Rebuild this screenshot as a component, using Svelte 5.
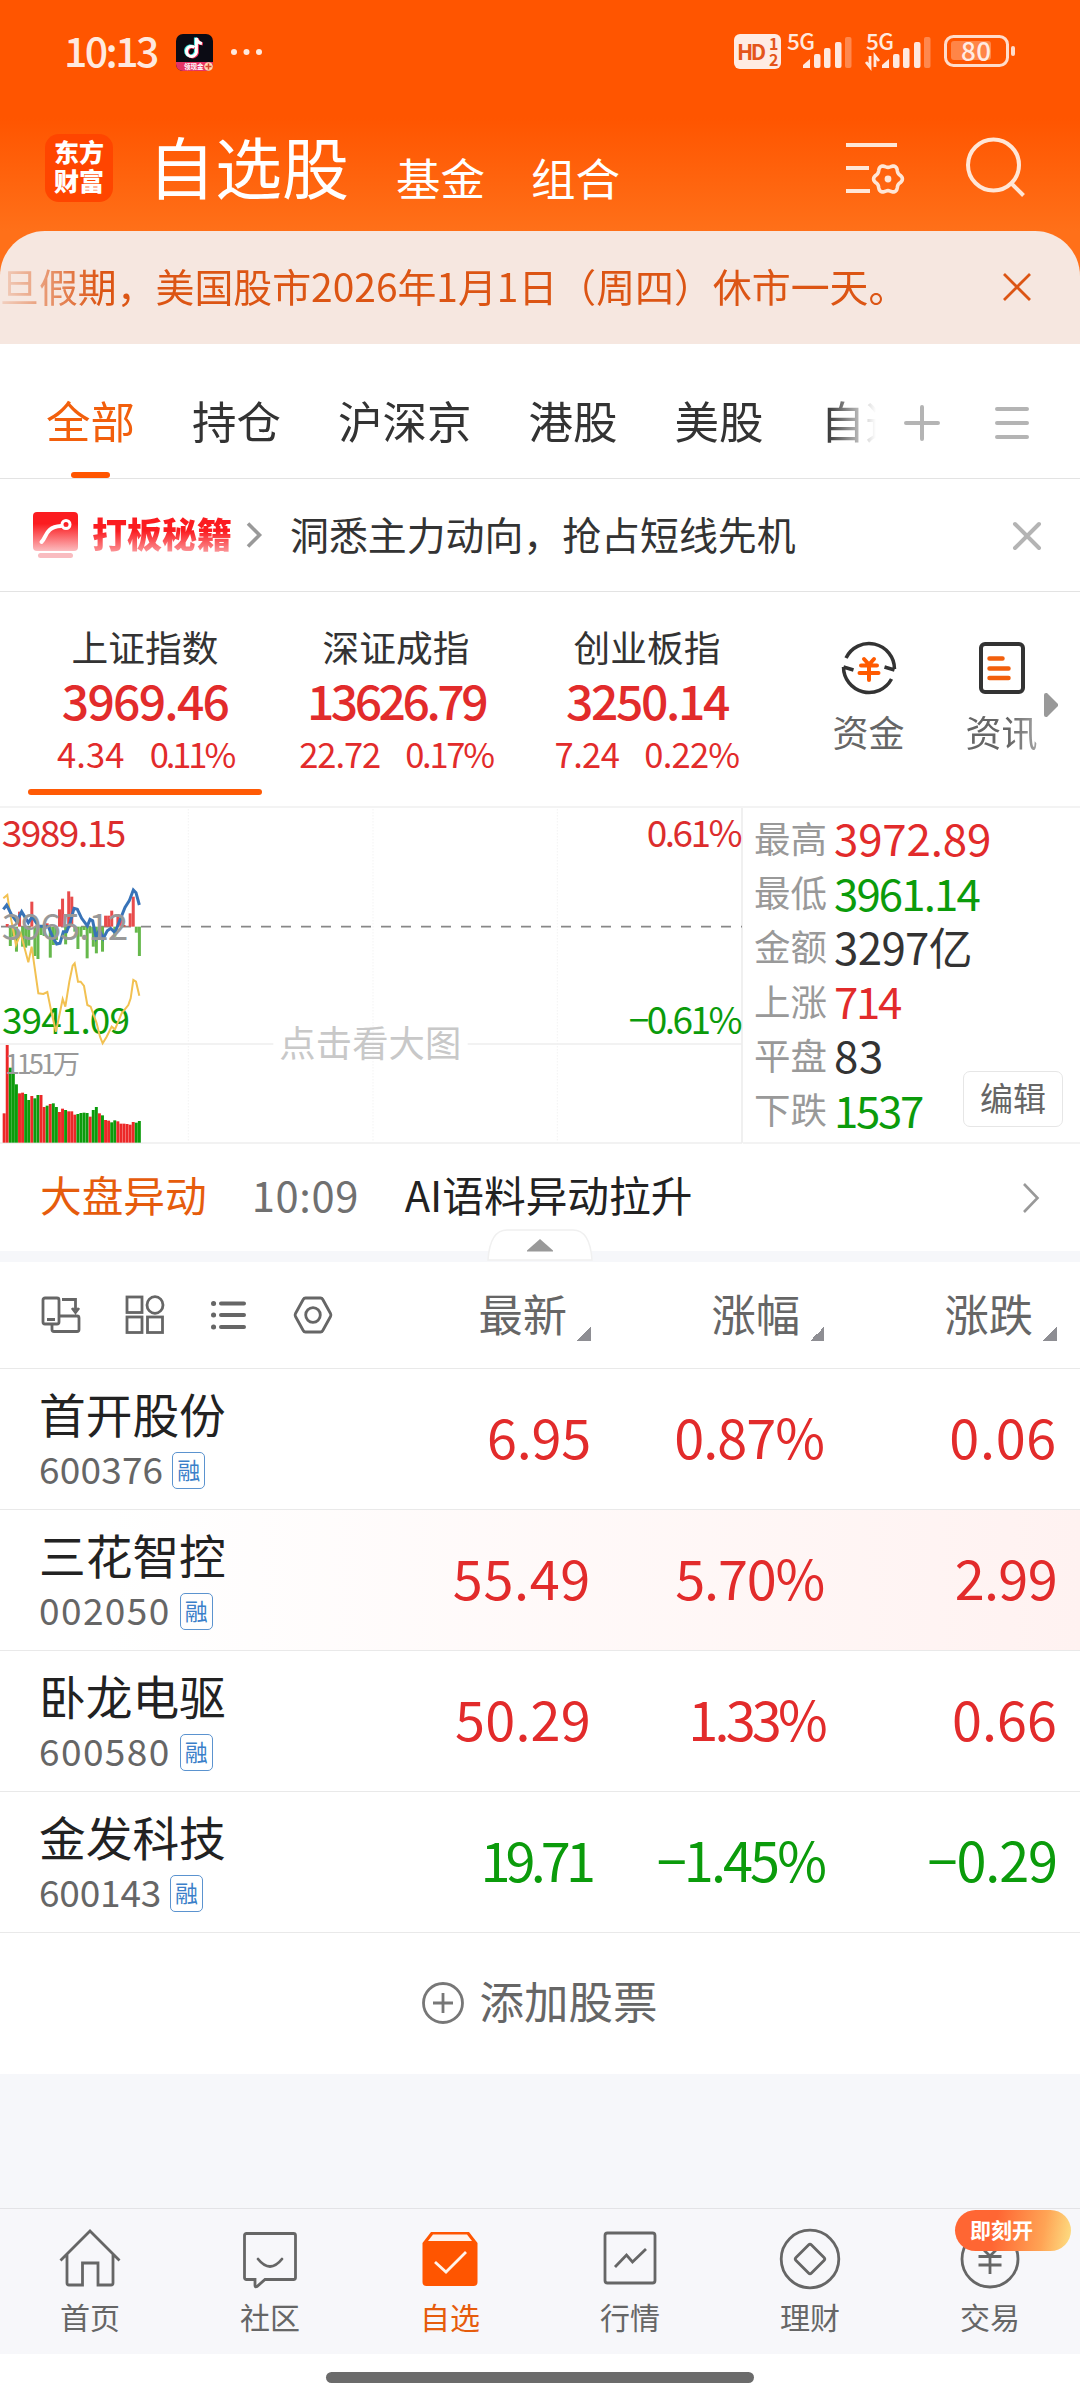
<script lang="ts">
  type Quote = {
    name: string;
    code: string;
    price: string;
    percent: string;
    change: string;
    down?: boolean;
    hot?: boolean;
  };

  const groups = ['全部', '持仓', '沪深京', '港股', '美股', '自选'];
  let activeGroup = $state('全部');

  const indices = [
    { name: '上证指数', value: '3969.46', change: '4.34', percent: '0.11%' },
    { name: '深证成指', value: '13626.79', change: '22.72', percent: '0.17%' },
    { name: '创业板指', value: '3250.14', change: '7.24', percent: '0.22%' }
  ];
  let activeIndex = $state(0);

  const stats = [
    { label: '最高', value: '3972.89', tone: 'up' },
    { label: '最低', value: '3961.14', tone: 'down' },
    { label: '金额', value: '3297亿', tone: '' },
    { label: '上涨', value: '714', tone: 'up' },
    { label: '平盘', value: '83', tone: '' },
    { label: '下跌', value: '1537', tone: 'down' }
  ];

  const columns = ['最新', '涨幅', '涨跌'];

  const quotes: Quote[] = [
    { name: '首开股份', code: '600376', price: '6.95', percent: '0.87%', change: '0.06' },
    { name: '三花智控', code: '002050', price: '55.49', percent: '5.70%', change: '2.99', hot: true },
    { name: '卧龙电驱', code: '600580', price: '50.29', percent: '1.33%', change: '0.66' },
    { name: '金发科技', code: '600143', price: '19.71', percent: '−1.45%', change: '−0.29', down: true }
  ];

  const nav = [
    { id: 'home', label: '首页' },
    { id: 'community', label: '社区' },
    { id: 'watch', label: '自选' },
    { id: 'market', label: '行情' },
    { id: 'wealth', label: '理财' },
    { id: 'trade', label: '交易' }
  ];
  let activeNav = $state('watch');

  // proportional figures: a number with many ones is set tighter, one with many zeros wider
  const widths: Record<string, number> = {
    0: 0.05,
    1: -0.17,
    3: -0.02,
    4: 0.06,
    5: 0.03,
    7: -0.05,
    8: 0.05,
    '%': -0.08,
    '−': -0.09
  };

  function tracking(text: string, base = 0) {
    const sum = [...text].reduce((total, char) => total + (widths[char] ?? 0), 0);
    return `${(base + sum / text.length).toFixed(4)}em`;
  }

  function gear(cx: number, cy: number) {
    const points: string[] = [];
    for (let deg = 0; deg < 360; deg += 5) {
      const a = (deg * Math.PI) / 180;
      const r = 13 + 1.4 * Math.cos(6 * a);
      points.push(`${(cx + r * Math.cos(a)).toFixed(2)},${(cy + r * Math.sin(a)).toFixed(2)}`);
    }
    return points.join(' ');
  }

  // chart units are a third of a pixel
  const slot = 9.22;
  const volumes = [
    88, 293, 225, 208, 175, 148, 150, 146, 128, 140, 133, 143, 143, 107, 111, 116, 118, 107, 92, 102, 98, 94, 94,
    84, 86, 89, 90, 89, 78, 98, 107, 88, 82, 68, 66, 61, 67, 64, 57, 57, 56, 54, 62, 60, 65
  ];
  const volumeSigns = 'rrgggrrggrggrrgrggrrgrrrggggrggrgrrggrrrrrrgg';
  const momentum = [
    0, 8, -58, -30, -75, 45, -60, -63, -57, 75, -88, -97, -25, -28, 10, -93, -55, -40, 52, 84, -53, 106, 90, -15,
    -67, -30, -10, -95, -20, -60, -80, -10, -75, 33, 33, 48, -30, 38, 20, 5, 0, 40, 90, -18, -88
  ];
  const priceLine =
    '10,328 20,315 35,345 50,365 65,335 85,368 97,350 115,378 145,380 160,415 170,432 180,430 190,395 200,395 210,370 222,325 232,328 245,355 262,378 270,358 278,362 288,412 298,390 310,415 322,392 332,385 345,398 360,360 375,322 388,302 400,270 408,278 418,315';
  const averageLine =
    '10,295 22,285 30,340 48,435 62,400 85,487 95,440 115,580 130,582 142,576 155,640 168,695 188,597 196,620 208,545 218,497 224,490 234,545 242,545 252,558 262,615 272,620 290,670 300,710 308,730 320,710 335,680 345,688 365,640 385,615 392,595 400,540 408,545 418,587';
</script>

<div class="app">
  <header>
    <div class="status">
      <span class="time">10:13</span>
      <svg class="tiktok" viewBox="0 0 37 37">
        <rect width="37" height="37" rx="7" fill="#0b0b14" />
        <g fill="none" stroke-width="3">
          <path d="M18.5 13.4a5 5 0 1 0 1.9 5V4c.3 3 2.5 5 5.5 5.5" stroke="#35e3e0" transform="translate(-1 -.5)" />
          <path d="M18.5 13.4a5 5 0 1 0 1.9 5V4c.3 3 2.5 5 5.5 5.5" stroke="#f43159" transform="translate(1 .5)" />
          <path d="M18.5 13.4a5 5 0 1 0 1.9 5V4c.3 3 2.5 5 5.5 5.5" stroke="#fff" />
        </g>
        <path d="M0 28h37v2a7 7 0 0 1-7 7H7a7 7 0 0 1-7-7z" fill="#e63366" />
        <circle cx="32.5" cy="32.5" r="4.3" fill="#ffd9b0" />
        <path d="M32.5 29.5v6M29.5 32.5h6" stroke="#d8432f" stroke-width="1.5" />
        <text x="8" y="35" font-size="6.5" font-weight="700" fill="#fff">领现金</text>
      </svg>
      <svg class="dots" viewBox="0 0 32 8" fill="#ffe9df">
        <circle cx="4" cy="4" r="3" /><circle cx="16.5" cy="4" r="3" /><circle cx="29" cy="4" r="3" />
      </svg>
      <svg class="system" viewBox="0 0 282 38">
        <rect x="0" y="1" width="47" height="35" rx="6" fill="#ffece3" />
        <g fill="#e4551a" font-weight="700">
          <text x="3" y="26.5" font-size="21.5" textLength="29">HD</text>
          <text x="35" y="17" font-size="16">1</text>
          <text x="35" y="32.5" font-size="16">2</text>
        </g>
        {#each [53, 132] as x}
          <text {x} y="17" font-size="22.5" font-weight="500" fill="#ffe9df" textLength="28">5G</text>
          <g fill="#ffe9df">
            <path d="M{x + 16} 35v-3l7-6v9z" />
            <rect x={x + 27} y="21" width="6.5" height="14" rx="2" />
            <rect x={x + 37} y="15" width="6.5" height="20" rx="2" />
            <rect x={x + 48} y="9" width="6.5" height="26" rx="2" />
            <rect x={x + 58} y="4" width="6.5" height="31" rx="2" opacity=".35" />
          </g>
        {/each}
        <path d="M136 23v11l-4-5M141 34V23l4 5" fill="none" stroke="#ffe9df" stroke-width="2.8" />
        <rect x="211.5" y="3.5" width="62" height="29" rx="8" fill="none" stroke="#ffdccb" stroke-width="3" />
        <rect x="217" y="8" width="40" height="19" rx="3" fill="#ff8547" />
        <rect x="277" y="13" width="4" height="10" rx="2" fill="#ffdccb" />
        <text x="227" y="27.5" font-size="26" font-weight="500" fill="#ffece3" textLength="30">80</text>
      </svg>
    </div>
    <div class="title-bar">
      <div class="logo"><span>东方</span><span>财富</span></div>
      <h1>自选股</h1>
      <span class="sub">基金</span>
      <span class="sub">组合</span>
      <svg class="filter" viewBox="0 0 58 52" fill="none" stroke="#ffe6d6" stroke-width="4">
        <path d="M0 3h51M0 26h23M0 49h24" />
        <polygon points={gear(42, 37)} stroke-width="3.6" />
        <circle cx="42" cy="37" r="3.4" fill="#ffe6d6" stroke="none" />
      </svg>
      <svg class="search" viewBox="0 0 60 60" fill="none" stroke="#ffe6d6" stroke-width="4">
        <circle cx="27.5" cy="28" r="25.5" />
        <path d="M45 46l12.5 12.5" />
      </svg>
    </div>
  </header>

  <div class="notice-wrap">
    <div class="notice">
      <p>旦假期，美国股市2026年1月1日（周四）休市一天。</p>
      <svg viewBox="0 0 28 28" fill="none" stroke="#dc5514" stroke-width="2.8"><path d="M1 1l26 26M27 1L1 27" /></svg>
    </div>
  </div>

  <nav class="groups">
    <div class="group-list">
      {#each groups as group}
        <button class:active={activeGroup === group} onclick={() => (activeGroup = group)}>{group}</button>
      {/each}
    </div>
    <svg class="plus" viewBox="0 0 36 36" stroke="#b4b4b4" stroke-width="4" stroke-linecap="round">
      <path d="M2 18h32M18 2v32" />
    </svg>
    <svg class="menu" viewBox="0 0 34 34" stroke="#b4b4b4" stroke-width="4" stroke-linecap="round">
      <path d="M2 3h30M2 17h30M2 31h30" />
    </svg>
  </nav>

  <div class="promo">
    <svg class="promo-icon" viewBox="0 0 45 46">
      <defs>
        <linearGradient id="promo" x1="0" y1="0" x2="0" y2="1">
          <stop offset=".3" stop-color="#fb1c20" />
          <stop offset="1" stop-color="#fcbcbf" />
        </linearGradient>
      </defs>
      <rect width="45" height="39" rx="4" fill="url(#promo)" />
      <rect x="5" y="41" width="35" height="5" rx="2.5" fill="#f9bcc0" />
      <path d="M8.5 30C14 25 12 15 28 14" fill="none" stroke="#fff" stroke-width="4" stroke-linecap="round" />
      <circle cx="33" cy="12.5" r="4" fill="none" stroke="#fff" stroke-width="3" />
    </svg>
    <strong>打板秘籍</strong>
    <svg class="promo-arrow" viewBox="0 0 16 26" fill="none" stroke="#999" stroke-width="3.6"><path d="M2 1.5L13.5 13 2 24.5" /></svg>
    <p>洞悉主力动向，抢占短线先机</p>
    <svg class="promo-close" viewBox="0 0 28 28" stroke="#b4b4b4" stroke-width="4" stroke-linecap="round">
      <path d="M2 2l24 24M26 2L2 26" />
    </svg>
  </div>

  <section class="indices">
    {#each indices as index, i}
      <button class="index" class:active={activeIndex === i} onclick={() => (activeIndex = i)}>
        <span class="index-name">{index.name}</span>
        <b style:letter-spacing={tracking(index.value, -0.042)}>{index.value}</b>
        <span class="index-change">
          <span style:letter-spacing={tracking(index.change, -0.02)}>{index.change}</span>
          <span style:letter-spacing={tracking(index.percent, -0.015)}>{index.percent}</span>
        </span>
      </button>
    {/each}
    <div class="tool">
      <svg viewBox="0 0 56 56" fill="none" stroke="#333" stroke-width="3.5">
        <path d="M5 18A25.500 25.500 0 0 1 53.500 29M53.500 30L43.500 27" />
        <path d="M50.500 39A25.500 25.500 0 0 1 2.500 27M2.500 27L12.500 30" />
        <g stroke="#ff5a00" stroke-width="4" stroke-linecap="round">
          <path d="M23 19l5 5.500L33 19M20 25.500h16M18.500 33h19M28 25v15" />
        </g>
      </svg>
      <span>资金</span>
    </div>
    <div class="tool">
      <svg viewBox="0 0 56 56" fill="none" stroke="#333" stroke-width="4">
        <rect x="7" y="4" width="42" height="48" rx="4" />
        <path d="M15.500 18.500h13M15.500 28.500h19M15.500 38h19" stroke="#f25f0c" stroke-width="4.5" stroke-linecap="round" />
      </svg>
      <span class="faded">资讯</span>
    </div>
    <svg class="more" viewBox="0 0 14 24"><path d="M0 2q0-2 2-2h1l11 11v2L3 24H2q-2 0-2-2z" fill="#999" /></svg>
  </section>

  <section class="overview">
    <svg class="chart" viewBox="0 24 2229 1008">
      <g stroke="#ededed" stroke-width="3" stroke-dasharray="3 6">
        <path d="M565 28V1028M1119 28V1028M1672 28V1028" />
      </g>
      <path d="M0 732H820M1403 732H2226M2226 24V1030M0 1029H2226" stroke="#eee" stroke-width="5" />
      <path d="M0 380H2226" stroke="#888" stroke-width="5" stroke-dasharray="30 30" stroke-dashoffset="-3" />

      {#each momentum as value, i}
        <rect
          x={8 + i * slot}
          y={value > 0 ? 380 - value : 380}
          width="9"
          height={Math.abs(value)}
          fill={value > 0 ? '#e84c4c' : '#66b84c'}
        />
      {/each}
      <text x="6" y="702" class="down" textLength="384">3941.09</text>
      <polyline points={averageLine} fill="none" stroke="#f2c152" stroke-width="6" />
      <polyline points={priceLine} fill="none" stroke="#3873b8" stroke-width="9" />
      {#each volumes as height, i}
        <rect
          x={8 + i * slot}
          y={1028 - height}
          width="8.8"
          {height}
          fill={volumeSigns[i] === 'r' ? '#ec2828' : '#0b9b0b'}
        />
      {/each}
      <text x="5" y="142" class="up" textLength="374">3989.15</text>
      <text x="5" y="420" class="mid" textLength="380">3965.12</text>
      <text x="14" y="822" class="volume" textLength="226">1151万</text>
      <text x="1940" y="142" class="up" textLength="288">0.61%</text>
      <text x="1886" y="702" class="down" textLength="342">−0.61%</text>
      <text x="838" y="772" class="hint" textLength="546">点击看大图</text>
    </svg>
    <div class="stats">
      {#each stats as stat}
        <div class="stat">
          <span>{stat.label}</span>
          <em class={stat.tone} style:letter-spacing={tracking(stat.value)}>{stat.value}</em>
        </div>
      {/each}
      <button class="edit">编辑</button>
    </div>
  </section>

  <div class="broadcast">
    <span class="broadcast-title">大盘异动</span>
    <time>10:09</time>
    <span>AI语料异动拉升</span>
    <svg class="broadcast-arrow" viewBox="0 0 16 30" fill="none" stroke="#999" stroke-width="2.6"><path d="M1 1l13.5 14L1 29" /></svg>
    <svg class="collapse" viewBox="0 0 106 32">
      <path d="M1 31Q3 1 20 1H86Q103 1 105 31z" fill="#fff" stroke="#f0f0f0" stroke-width="1.5" />
      <path d="M53 10l13 11.5v1H40v-1z" fill="#999" />
    </svg>
  </div>

  <section class="table">
    <div class="head">
      <div class="views">
        <svg viewBox="0 0 40 40">
          <rect x="2" y="3" width="16" height="26" rx="2" />
          <path d="M6 24.500h8M21 4.500h13.500V15M31 13l3.500 4.500L38 13M11 29v5.500q0 2 2 2h23q2 0 2-2V23q0-2-2-2H18" />
        </svg>
        <svg viewBox="0 0 40 40">
          <rect x="2" y="2" width="15" height="15.5" /><ellipse cx="30" cy="10" rx="8" ry="8.3" />
          <rect x="2" y="22" width="15" height="15.5" /><rect x="22.5" y="22" width="15" height="15.5" />
        </svg>
        <svg viewBox="0 0 40 40">
          <path d="M12 8.500h23M12 20h23M12 32h23" stroke-width="4" stroke-linecap="round" />
          <path d="M4.500 8.500h.1M4.500 20h.1M4.500 32h.1" stroke-width="5" stroke-linecap="round" />
        </svg>
        <svg viewBox="0 0 40 40">
          <path d="M12.500 3h15q1.500 0 2.300 1.500L37.500 18.500q.8 1.500 0 3L29.800 35.500q-.8 1.500-2.300 1.500h-15q-1.500 0-2.300-1.500L2.500 21.500q-.8-1.500 0-3L10.200 4.500Q11 3 12.500 3z" />
          <circle cx="20" cy="20" r="7.3" />
        </svg>
      </div>
      {#each columns as column}
        <div class="column">{column}<i></i></div>
      {/each}
    </div>
    {#each quotes as quote}
      <div class="row" class:hot={quote.hot} class:falling={quote.down}>
        <div class="stock">
          <span class="stock-name">{quote.name}</span>
          <span class="stock-code">
            <span style:letter-spacing={tracking(quote.code)}>{quote.code}</span>
            <small>融</small>
          </span>
        </div>
        {#each [quote.price, quote.percent, quote.change] as figure}
          <span class="figure" style:letter-spacing={tracking(figure, -0.012)}>{figure}</span>
        {/each}
      </div>
    {/each}
    <button class="add">
      <svg viewBox="0 0 42 42" fill="none" stroke="#777" stroke-width="2.8">
        <circle cx="21" cy="21" r="19.5" /><path d="M21 11v20M11 21h20" />
      </svg>
      <span>添加股票</span>
    </button>
  </section>

  <footer>
    {#each nav as item}
      <button class:active={activeNav === item.id} onclick={() => (activeNav = item.id)}>
        <svg viewBox="0 0 62 62" fill="none" stroke="#666" stroke-width="2.8">
          {#if item.id === 'home'}
            <path d="M1.500 32.500L31 3l29.500 29.500M8 26v29q0 2 2 2h13.500V35h15.500v22H52q2 0 2-2V26" />
          {:else if item.id === 'community'}
            <path d="M7.500 5.500h47q2 0 2 2v42q0 2-2 2H26l-8 7q-2 1-2-1v-6H7.500q-2 0-2-2v-42q0-2 2-2z" />
            <path d="M19 31q12 15 24 0" stroke-linecap="round" />
          {:else if item.id === 'watch'}
            <path d="M3.500 15v39q0 4 4 4h47q4 0 4-4V15L50 4H12z" fill="#ff5500" stroke="none" />
            <path d="M14 6.500h34l5 6.500H9z" fill="#fff3eb" stroke="none" />
            <path d="M16 34l11 10L47 24" stroke="#fff3eb" />
          {:else if item.id === 'market'}
            <rect x="6" y="5" width="50" height="50" rx="2.5" />
            <path d="M16 39l11.500-12 6 7L47 21" />
          {:else if item.id === 'wealth'}
            <circle cx="31" cy="31" r="28.8" />
            <path d="M29.500 17q1.500-1.500 3 0l12.500 12.500q1.500 1.500 0 3L32.500 45q-1.500 1.500-3 0L17 32.500q-1.500-1.500 0-3z" />
          {:else}
            <circle cx="31" cy="31" r="28" />
            <path d="M21 18l10 10 10-10M19.500 28.500h23M19.500 37h23M31 28v18" />
          {/if}
        </svg>
        <span>{item.label}</span>
        {#if item.id === 'trade'}<span class="badge">即刻开</span>{/if}
      </button>
    {/each}
  </footer>
  <div class="gesture"><i></i></div>
</div>

<style>
  :global(body) {
    background: #fff;
  }

  .app {
    width: 1080px;
    height: 2400px;
    display: flex;
    flex-direction: column;
    overflow: hidden;
    background: #f6f7fa;
    color: #333;
    font-family: 'Noto Sans CJK SC', sans-serif;
    line-height: 1;
    white-space: nowrap;
  }

  button {
    padding: 0;
    border: 0;
    background: none;
    color: inherit;
    font: inherit;
  }

  h1,
  p {
    margin: 0;
    font-weight: 400;
  }

  svg {
    display: block;
    flex: none;
    overflow: visible;
  }

  header {
    height: 231px;
    background: linear-gradient(#ff5500 0 118px, #ff7019 231px);
    color: #fff;
  }

  .status {
    display: flex;
    align-items: center;
    height: 104px;
    padding: 0 64px;
  }

  .time {
    width: 112px;
    margin-top: -5px;
    font-size: 41px;
    font-weight: 500;
    letter-spacing: -2.6px;
    color: #ffe9df;
  }

  .tiktok {
    width: 37px;
    height: 37px;
  }

  .dots {
    width: 32px;
    margin-left: 17px;
  }

  .system {
    width: 282px;
    height: 38px;
    margin: 0 0 0 auto;
  }

  .title-bar {
    display: flex;
    align-items: flex-end;
    height: 98px;
    padding: 0 56px 0 45px;
  }

  .logo {
    display: grid;
    place-content: center;
    width: 68px;
    height: 68px;
    margin-right: 35px;
    padding-bottom: 4px;
    box-sizing: border-box;
    border-radius: 14px;
    background: #ff4500;
    font-size: 25px;
    font-weight: 900;
    line-height: 29px;
  }

  h1 {
    margin: 0 47px 4px 0;
    font-size: 67px;
  }

  .sub {
    margin: 0 46px 3px 0;
    font-size: 44.5px;
  }

  .filter {
    width: 58px;
    height: 52px;
    margin: 0 62px 8px auto;
  }

  .search {
    width: 60px;
    height: 60px;
    margin: 0 -2px 5px 0;
  }

  .notice-wrap {
    background: #ff7019;
  }

  .notice {
    display: flex;
    align-items: center;
    justify-content: space-between;
    height: 113px;
    padding-right: 49px;
    border-radius: 45px 45px 0 0;
    background: #f6e7e0;
    color: #dc5514;
  }

  .notice p {
    margin-top: -5px;
    font-size: 38.9px;
    line-height: 65px;
    mask-image: linear-gradient(90deg, rgba(0, 0, 0, 0.15), #000 100px);
  }

  .notice svg {
    width: 28px;
    margin-bottom: 1px;
  }

  .groups {
    display: flex;
    align-items: center;
    height: 134px;
    padding: 0 50px 0 46px;
    border-bottom: 1px solid #e3e3e3;
    background: #fff;
  }

  .group-list {
    display: flex;
    gap: 57px;
    width: 830px;
    height: 134px;
    margin-right: 28px;
    overflow: hidden;
    mask-image: linear-gradient(90deg, #000 780px, transparent 830px);
  }

  .groups button {
    display: flex;
    flex: none;
    align-items: center;
    position: relative;
    padding-top: 18px;
    font-size: 44.5px;
    line-height: 38px;
  }

  .groups .active {
    color: #f25f0c;
  }

  .groups .active::after {
    content: '';
    position: absolute;
    bottom: 0;
    left: 25px;
    width: 39px;
    height: 6px;
    border-radius: 3px;
    background: #ff5500;
  }

  .plus {
    width: 36px;
    margin: 23px 55px 0 0;
  }

  .menu {
    width: 34px;
    margin: 23px 0 0 0;
  }

  .promo {
    display: flex;
    align-items: center;
    height: 112px;
    padding: 0 39px 0 33px;
    border-bottom: 1px solid #e3e3e3;
    background: #fff;
  }

  .promo-icon {
    width: 45px;
    margin-right: 14px;
  }

  .promo strong {
    width: 154px;
    margin-top: -4px;
    background: linear-gradient(#fb1c20 45%, #fba0a3 100%);
    background-clip: text;
    color: transparent;
    font-size: 35px;
    font-weight: 900;
    line-height: 42px;
  }

  .promo-arrow {
    width: 16px;
    margin-right: 28px;
  }

  .promo p {
    margin-top: -4px;
    font-size: 38.9px;
  }

  .promo-close {
    width: 28px;
    margin-top: 1px;
    margin-left: auto;
  }

  .indices {
    display: flex;
    position: relative;
    height: 214px;
    padding-left: 28px;
    border-bottom: 2px solid #f3f3f3;
    background: #fff;
  }

  .index {
    display: flex;
    flex-direction: column;
    align-items: center;
    width: 234px;
    height: 203px;
    margin-right: 17px;
    padding-top: 36px;
    box-sizing: border-box;
    position: relative;
    color: #e22b2b;
  }

  .index.active::after {
    content: '';
    position: absolute;
    bottom: 0;
    left: 0;
    width: 234px;
    height: 6px;
    border-radius: 3px;
    background: #ff5a05;
  }

  .index-name {
    margin-bottom: 10px;
    color: #333;
    font-size: 36.7px;
  }

  .index b {
    margin-bottom: 13px;
    font-size: 48px;
    font-weight: 500;
  }

  .index-change {
    display: flex;
    gap: 25px;
    font-size: 34.5px;
  }

  .tool {
    display: flex;
    flex-direction: column;
    align-items: center;
    width: 133px;
    padding-top: 48px;
    color: #666;
    font-size: 36px;
  }

  .tool svg {
    width: 56px;
    margin-bottom: 17px;
  }

  .index + .tool {
    margin-left: 21px;
  }

  .faded {
    line-height: 40px;
    margin-top: -2px;
    mask-image: linear-gradient(90deg, #000 60%, rgba(0, 0, 0, 0.6));
  }

  .more {
    position: absolute;
    top: 101px;
    left: 1044px;
    width: 14px;
  }

  .overview {
    display: flex;
    height: 336px;
    background: #fff;
  }

  .chart {
    width: 743px;
    height: 336px;
  }

  .chart text {
    font-size: 111px;
  }

  .chart .volume {
    font-size: 82px;
    fill: #999;
  }

  .chart .hint {
    font-size: 109px;
    fill: #c8c8c8;
  }

  .up {
    color: #e22b2b;
    fill: #dc2d2d;
  }

  .down {
    color: #0b9b0b;
    fill: #0b9b0b;
  }

  .mid {
    fill: #999;
  }

  .stats {
    flex: 1;
    position: relative;
    padding: 3px 0 0 11px;
    border-bottom: 2px solid #f3f3f3;
    box-sizing: border-box;
  }

  .stat {
    display: flex;
    align-items: center;
    height: 54.3px;
    color: #999;
    font-size: 36.5px;
  }

  .stat em {
    margin-left: 7px;
    color: #333;
    font-size: 43.8px;
    font-style: normal;
  }

  .stat em.up {
    color: #e22b2b;
  }

  .stat em.down {
    color: #0b9b0b;
  }

  .edit {
    position: absolute;
    right: 17px;
    bottom: 15px;
    width: 100px;
    height: 56px;
    padding-bottom: 3px;
    border: 1px solid #e6e6e6;
    border-radius: 7px;
    color: #666;
    font-size: 33px;
  }

  .broadcast {
    display: flex;
    align-items: center;
    position: relative;
    height: 107px;
    padding: 0 41px 0 40px;
    border-bottom: 11px solid #f6f7fa;
    background: #fff;
    color: #222;
    font-size: 41.7px;
  }

  .broadcast > span,
  time {
    margin-top: -5px;
  }

  .broadcast-title {
    color: #e65c0c;
  }

  time {
    width: 153px;
    margin-left: 45px;
    color: #707070;
    letter-spacing: 0.6px;
  }

  .broadcast-arrow {
    width: 16px;
    margin-left: auto;
  }

  .collapse {
    position: absolute;
    bottom: -10px;
    left: 487px;
    width: 106px;
  }

  .table {
    background: #fff;
  }

  .head,
  .row {
    display: grid;
    grid-template-columns: 356px 235px 233px 233px;
    align-items: center;
    box-sizing: border-box;
    border-bottom: 1px solid #e9e9e9;
  }

  .head {
    height: 107px;
  }

  .views {
    display: flex;
    gap: 44px;
    padding-left: 41px;
  }

  .views svg {
    width: 40px;
    fill: none;
    stroke: #666;
    stroke-width: 2.8;
  }

  .column {
    display: flex;
    justify-content: flex-end;
    margin-top: -4px;
    color: #666;
    font-size: 44.3px;
  }

  .column i {
    align-self: flex-end;
    width: 14px;
    height: 14px;
    margin: 0 0 -6px 10px;
    background: linear-gradient(135deg, transparent 50%, #8e8e93 50%);
  }

  .row {
    height: 141px;
    color: #e22b2b;
  }

  .hot {
    background: linear-gradient(90deg, #fff 10%, #fff2f1);
  }

  .falling {
    color: #0b9b0b;
  }

  .stock {
    display: grid;
    gap: 13px;
    margin-top: -1px;
    padding-left: 39px;
  }

  .stock-name {
    color: #222;
    font-size: 46.7px;
  }

  .stock-code {
    display: flex;
    align-items: center;
    color: #666;
    font-size: 37px;
  }

  small {
    display: grid;
    place-content: center;
    width: 33px;
    height: 37px;
    margin: 2px 0 -2px 9px;
    padding-bottom: 2px;
    box-sizing: border-box;
    border: 1.5px solid #5b93cf;
    border-radius: 5px;
    color: #3b7fc9;
    font-size: 23px;
  }

  .figure {
    margin-top: -6px;
    text-align: right;
    font-size: 54px;
  }

  .add {
    display: flex;
    align-items: center;
    justify-content: center;
    gap: 15px;
    width: 100%;
    height: 141px;
    color: #666;
    font-size: 44.5px;
  }

  .add svg {
    width: 42px;
    margin-top: -1px;
  }

  .add span {
    margin-top: -6px;
  }

  footer {
    display: grid;
    grid-template-columns: repeat(6, 180px);
    height: 145px;
    margin-top: auto;
    border-top: 1px solid #e3e3e6;
    background: #f7f7fa;
  }

  footer button {
    display: flex;
    flex-direction: column;
    align-items: center;
    position: relative;
    padding-top: 19px;
    color: #666;
    font-size: 30px;
  }

  footer svg {
    width: 62px;
    margin-bottom: 11px;
  }

  footer .active {
    color: #e65c0c;
  }

  .badge {
    position: absolute;
    top: 1px;
    left: 55px;
    width: 116px;
    height: 41px;
    padding: 9px 0 0 15px;
    box-sizing: border-box;
    border-radius: 21px;
    background: linear-gradient(100deg, #ff6633 35%, #ffa455 75%, #fde084);
    color: #fff;
    font-size: 21px;
    font-weight: 700;
    text-align: left;
  }

  .gesture {
    display: flex;
    justify-content: center;
    height: 46px;
    padding-top: 18px;
    box-sizing: border-box;
    background: #fff;
  }

  .gesture i {
    width: 428px;
    height: 11px;
    border-radius: 6px;
    background: #6b6b6b;
  }
</style>
